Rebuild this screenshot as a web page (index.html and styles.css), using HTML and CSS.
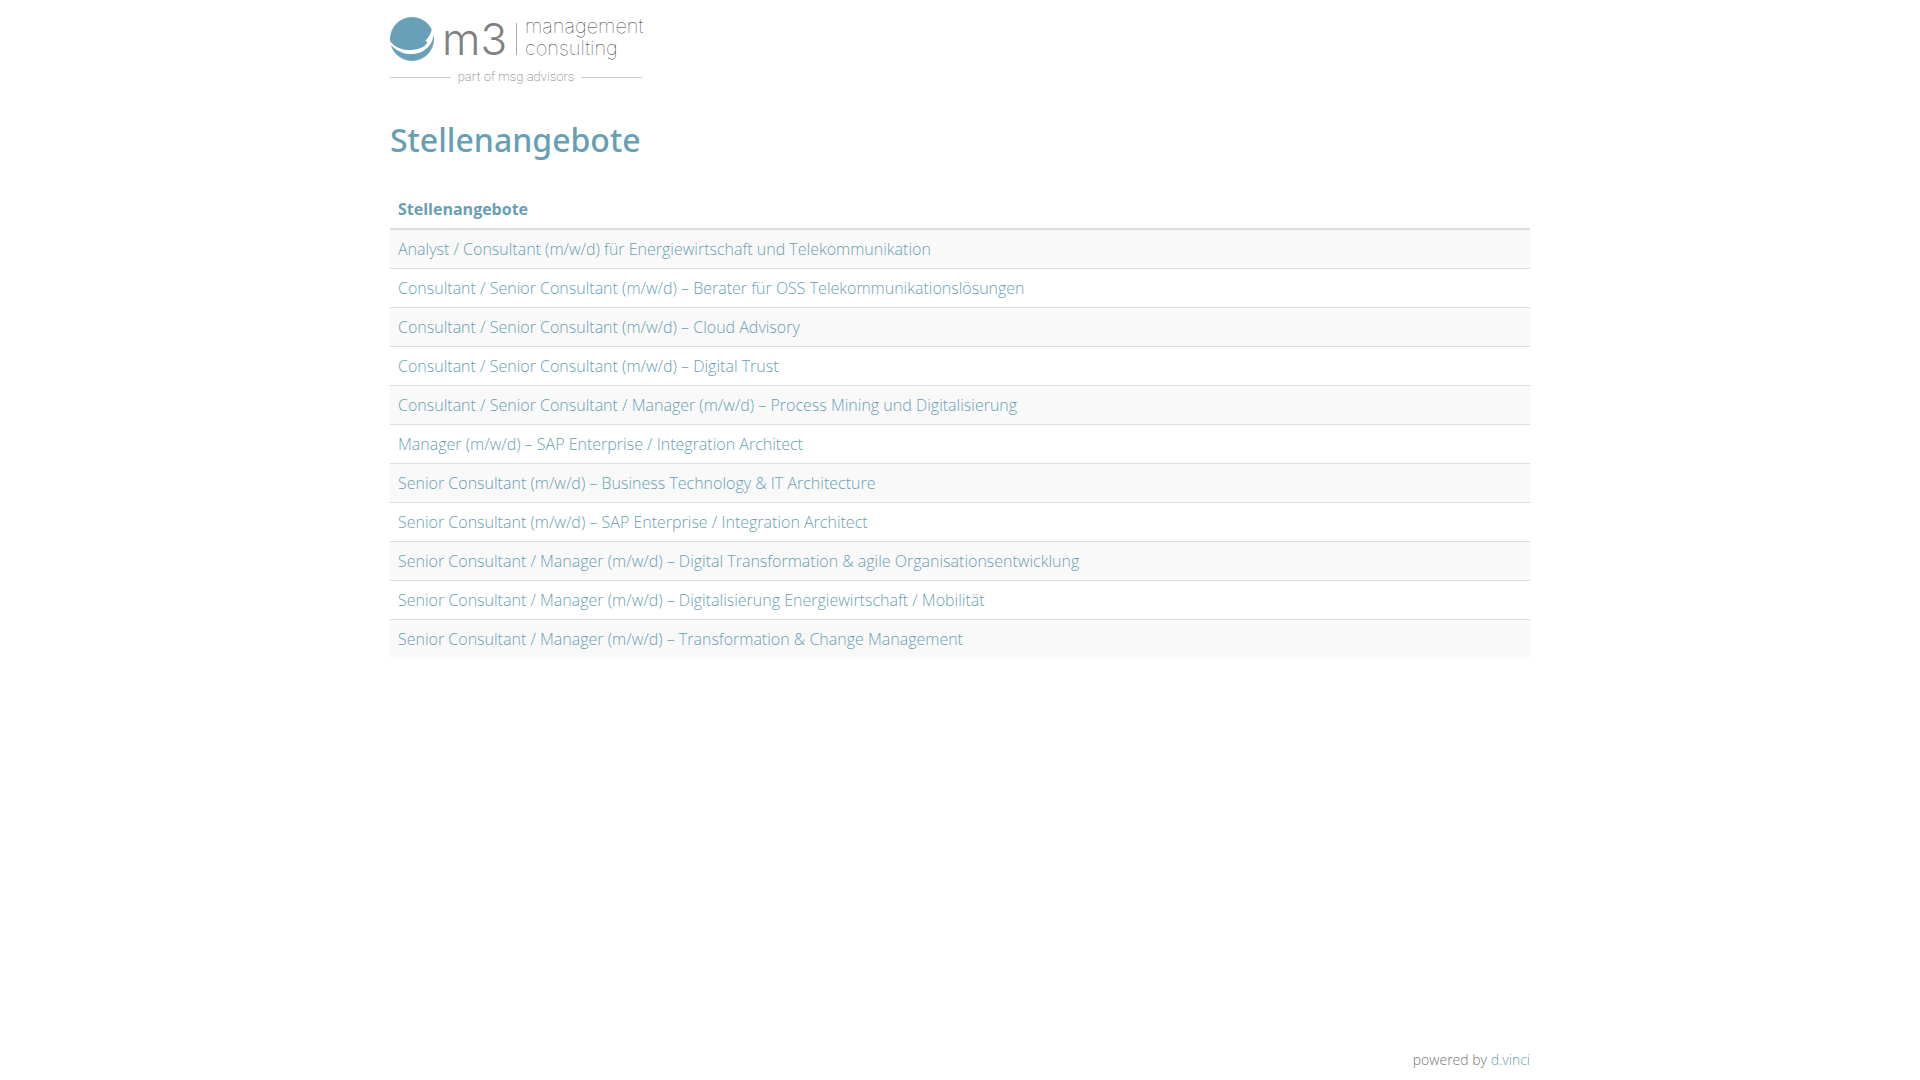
FILE: index.html
```html
<!DOCTYPE html>
<html lang="de">
<head>
<meta charset="utf-8">
<meta name="viewport" content="width=device-width, initial-scale=1">
<title>Stellenangebote</title>
<link rel="stylesheet" href="styles.css">
</head>
<body>
<div class="container">
  <header class="header">
    <svg class="logo" viewBox="0 0 253 70" role="img" aria-label="m3 management consulting">
      <circle class="globe" cx="22" cy="23" r="22"/>
      <path class="swoosh" d="M-1 24C5 32 13 34.500 21 34C29 33.500 35 31 37.500 26.500L35.500 24.500C39 21 41.500 17 42 12L44 15C44 25 39 33 30 36.500C19 40.500 7 37 -1 27Z"/>
      <text class="logo-name" x="52" y="39">m3</text>
      <path class="logo-line" d="M126.500 7V39"/>
      <text class="logo-sub" x="135" y="17">management</text>
      <text class="logo-sub" x="135" y="39">consulting</text>
      <path class="logo-rule" d="M0 61.500H61M191 61.500H252"/>
      <text class="logo-part" x="126" y="65">part of msg advisors</text>
    </svg>
  </header>
  <main class="main">
    <h1 class="title">Stellenangebote</h1>
    <table class="jobs">
      <thead><tr><th scope="col">Stellenangebote</th></tr></thead>
      <tbody>
        <tr><td><a href="#">Analyst / Consultant (m/w/d) für Energiewirtschaft und Telekommunikation</a></td></tr>
        <tr><td><a href="#">Consultant / Senior Consultant (m/w/d) – Berater für OSS Telekommunikationslösungen</a></td></tr>
        <tr><td><a href="#">Consultant / Senior Consultant (m/w/d) – Cloud Advisory</a></td></tr>
        <tr><td><a href="#">Consultant / Senior Consultant (m/w/d) – Digital Trust</a></td></tr>
        <tr><td><a href="#">Consultant / Senior Consultant / Manager (m/w/d) – Process Mining und Digitalisierung</a></td></tr>
        <tr><td><a href="#">Manager (m/w/d) – SAP Enterprise / Integration Architect</a></td></tr>
        <tr><td><a href="#">Senior Consultant (m/w/d) – Business Technology &amp; IT Architecture</a></td></tr>
        <tr><td><a href="#">Senior Consultant (m/w/d) – SAP Enterprise / Integration Architect</a></td></tr>
        <tr><td><a href="#">Senior Consultant / Manager (m/w/d) – Digital Transformation &amp; agile Organisationsentwicklung</a></td></tr>
        <tr><td><a href="#">Senior Consultant / Manager (m/w/d) – Digitalisierung Energiewirtschaft / Mobilität</a></td></tr>
        <tr><td><a href="#">Senior Consultant / Manager (m/w/d) – Transformation &amp; Change Management</a></td></tr>
      </tbody>
    </table>
  </main>
  <footer class="footer">powered by <a href="#">d.vinci</a></footer>
</div>
</body>
</html>
```
FILE: styles.css
```css
* {
  box-sizing: border-box;
}

body {
  margin: 0;
  background: #fff;
  color: #777;
  font-family: "Open Sans", sans-serif;
  font-size: 16px;
  font-weight: 300;
  line-height: 22px;
}

a {
  color: #679fb5;
  text-decoration: none;
}

a:hover {
  text-decoration: underline;
}

.container {
  display: flex;
  flex-direction: column;
  max-width: 1170px;
  min-height: 100vh;
  margin: 0 auto;
  padding: 16px 15px 9px;
}

.logo {
  display: block;
  overflow: visible;
  width: 253px;
  height: 70px;
  font-family: Inter, sans-serif;
}

.globe {
  fill: #68a1b7;
}

.swoosh {
  fill: #fff;
}

.logo-name {
  fill: #808080;
  font-size: 44px;
  font-weight: 300;
}

.logo-sub {
  fill: #333;
  font-size: 20px;
  font-weight: 100;
}

.logo-part {
  fill: #888;
  font-family: Roboto, sans-serif;
  font-size: 13px;
  font-weight: 200;
  text-anchor: middle;
}

.logo-line,
.logo-rule {
  fill: none;
  stroke: #aaa;
}

.logo-rule {
  stroke: #ccc;
}

.main {
  flex: 1;
}

.title {
  margin: 32px 0 28px;
  color: #679fb5;
  font-family: "Noto Sans", sans-serif;
  font-size: 32px;
  font-weight: 500;
  line-height: 44px;
}

.jobs {
  width: 100%;
  border-collapse: separate;
  border-spacing: 0;
  text-align: left;
}

.jobs th {
  padding: 8px;
  border-bottom: 2px solid #ddd;
  color: #679fb5;
  font-weight: 700;
}

.jobs td {
  padding: 8px;
  border-top: 1px solid #ddd;
}

.jobs tbody tr:first-child td {
  border-top: 0;
}

.jobs tbody tr:nth-child(odd) {
  background: #f9f9f9;
}

.footer {
  font-size: 14px;
  text-align: right;
}
```
